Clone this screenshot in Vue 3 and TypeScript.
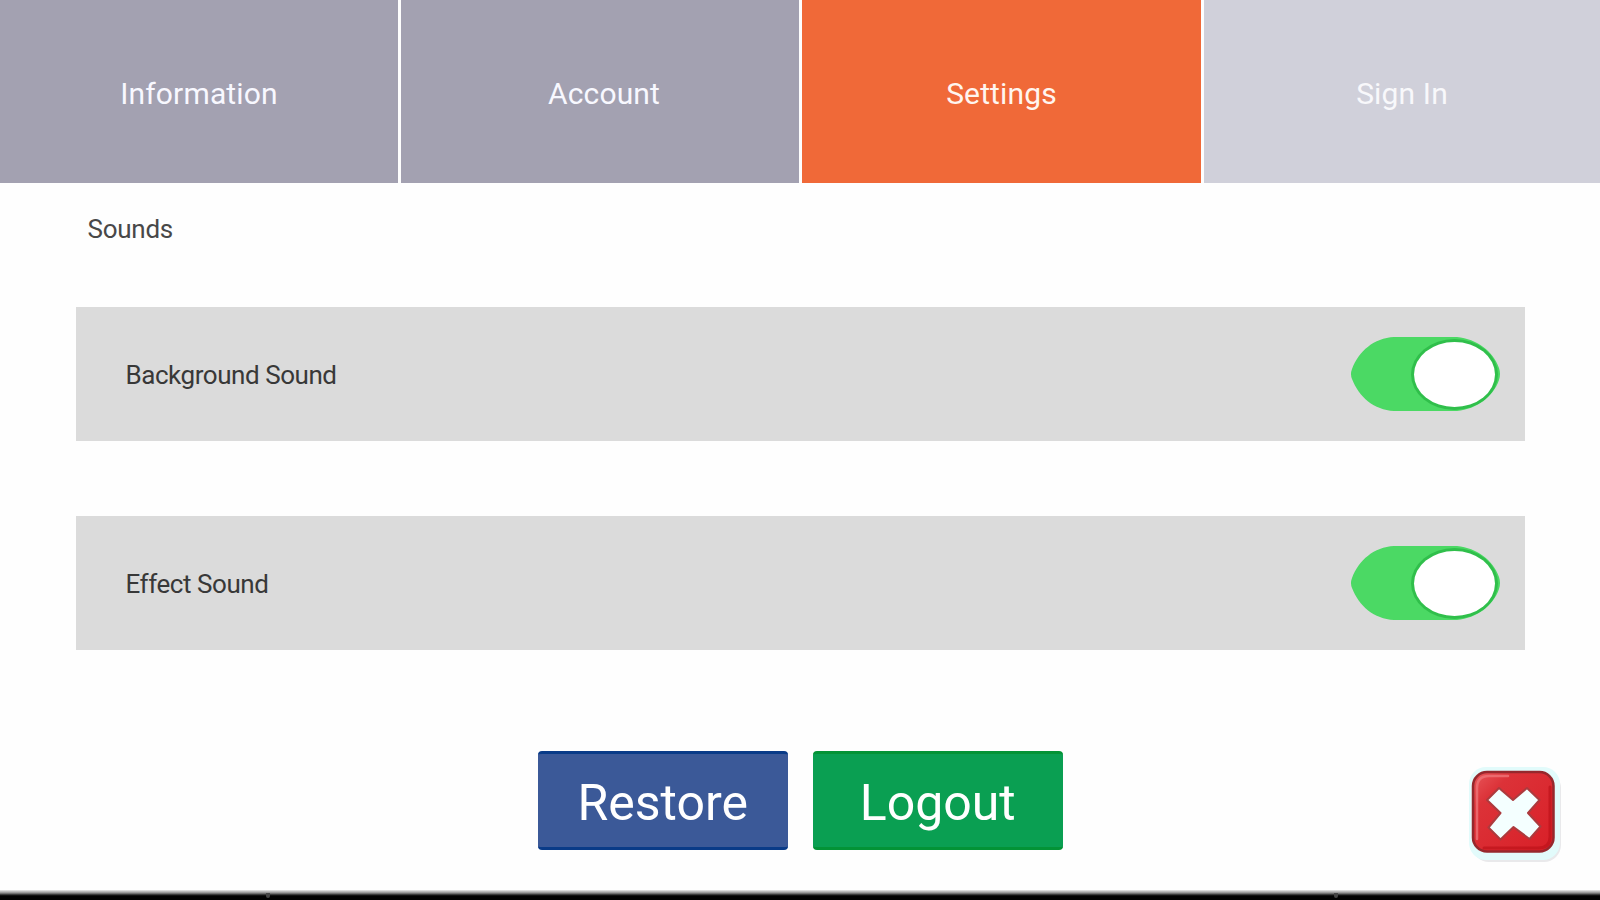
<template>
  <div class="screen">
    <nav class="tabs">
      <button
        v-for="tab in tabs"
        :key="tab.id"
        :class="['tab', tab.id, { active: activeTab === tab.id, disabled: tab.disabled }]"
        :disabled="tab.disabled"
        @click="activeTab = tab.id"
      >
        <span>{{ tab.label }}</span>
      </button>
    </nav>

    <main class="content">
      <h2 class="section-title">Sounds</h2>

      <div v-for="item in sounds" :key="item.id" class="sound-row">
        <span class="sound-label">{{ item.label }}</span>
        <button
          :class="['toggle', { on: item.enabled }]"
          role="switch"
          :aria-checked="item.enabled"
          :aria-label="item.label"
          @click="item.enabled = !item.enabled"
        >
          <span class="knob"></span>
        </button>
      </div>

      <div class="actions">
        <button class="action restore">Restore</button>
        <button class="action logout">Logout</button>
      </div>
    </main>

    <button class="close" aria-label="Close">
      <svg viewBox="0 0 96 98" width="96" height="98">
        <defs>
          <linearGradient id="closeFill" x1="0" y1="0" x2="1" y2="1">
            <stop offset="0" stop-color="#e8575b" />
            <stop offset="0.25" stop-color="#dc3238" />
            <stop offset="1" stop-color="#d81f27" />
          </linearGradient>
        </defs>
        <rect x="4" y="4" width="89" height="91" rx="17" fill="#e9e9eb" />
        <rect x="1" y="0" width="91" height="93" rx="17" fill="#e2fbfb" />
        <rect x="5" y="5" width="80.500" height="79.500" rx="14" fill="url(#closeFill)" stroke="#96282d" stroke-width="2.5" />
        <path d="M9 72V21Q9 9 21 9H40" fill="none" stroke="#ee7478" stroke-width="2.5" stroke-linecap="round" opacity="0.8" />
        <path d="M16 81H70Q82 81 82 70V20" fill="none" stroke="#bd1219" stroke-width="3" stroke-linecap="round" opacity="0.7" />
        <path
          d="M31 21L45 33L59 21L71.500 33L60 46L72.500 59.500L61.500 72L45.500 60L32.500 72.500L20.500 60.500L32.500 46L19 33Z"
          fill="#f4ffff"
          stroke="#ac3b3e"
          stroke-width="2"
          stroke-linejoin="round"
        />
      </svg>
    </button>

    <footer class="bottom-bar">
      <span class="notch"></span>
      <span class="notch"></span>
    </footer>
  </div>
</template>

<script setup lang="ts">
import { ref } from 'vue'

interface Tab {
  id: string
  label: string
  disabled?: boolean
}

interface SoundOption {
  id: string
  label: string
  enabled: boolean
}

const tabs: Tab[] = [
  { id: 'information', label: 'Information' },
  { id: 'account', label: 'Account' },
  { id: 'settings', label: 'Settings' },
  { id: 'sign-in', label: 'Sign In', disabled: true }
]

// Currently selected tab
const activeTab = ref('settings')

const sounds = ref<SoundOption[]>([
  { id: 'background', label: 'Background Sound', enabled: true },
  { id: 'effect', label: 'Effect Sound', enabled: true }
])
</script>

<style>
body {
  margin: 0;
  background: #ffffff;
}
</style>

<style scoped>
.screen {
  position: relative;
  display: flex;
  flex-direction: column;
  width: 100%;
  height: 100vh;
  overflow: hidden;
  background: #fefefe;
  font-family: Roboto, 'Liberation Sans', sans-serif;
}

button {
  border: none;
  padding: 0;
  font-family: inherit;
  cursor: pointer;
}

.tabs {
  display: grid;
  grid-template-columns: 398px 398px 399px 1fr;
  gap: 3px;
  height: 182.500px;
  flex: none;
}

.tab {
  display: flex;
  align-items: center;
  justify-content: center;
  padding-top: 4px;
  background: #a3a1b1;
  color: #f8f8ff;
  font-size: 30px;
  letter-spacing: 0.15px;
}

.tab.account {
  padding-left: 8px;
}

.tab.active {
  background: #f06938;
  color: #fff5ef;
}

.tab.disabled {
  background: #d0d0da;
  color: #f8f8fb;
  cursor: default;
}

.content {
  display: flex;
  flex-direction: column;
  flex: 1;
  padding: 0 75px 0 75.500px;
}

.section-title {
  margin: 30px 0 0 12px;
  height: 94.500px;
  font-size: 26px;
  font-weight: 400;
  line-height: 32px;
  letter-spacing: -0.25px;
  color: #484848;
}

.sound-row {
  display: flex;
  align-items: center;
  justify-content: space-between;
  box-sizing: border-box;
  height: 134px;
  padding: 0 25px 0 50px;
  background: #dbdbdb;
}

.sound-row + .sound-row {
  margin-top: 75px;
}

.sound-label {
  padding-top: 2px;
  font-size: 26px;
  letter-spacing: -0.45px;
  color: #383838;
}

/* The track ends in a slight point on both sides */
.toggle {
  display: flex;
  align-items: center;
  box-sizing: border-box;
  width: 150px;
  height: 74px;
  padding: 0 5px;
  background: #b4b4b4;
  clip-path: path('M44 0H107C127 2 143 14 149 31Q151 37 149 43C143 60 127 72 107 74H44C24 73 9 60 2 42Q0 37 2 32C9 14 24 1 44 0Z');
}

.toggle.on {
  justify-content: flex-end;
  background: #4bd964;
}

.knob {
  width: 81px;
  height: 65px;
  border-radius: 50%;
  background: #ffffff;
  box-shadow: 0 0 0 3px #30bf4b;
}

.actions {
  display: flex;
  justify-content: center;
  gap: 25px;
  margin-top: 101px;
}

.action {
  box-sizing: border-box;
  width: 250px;
  height: 99px;
  padding-top: 4px;
  border-radius: 4px;
  color: #ffffff;
  font-size: 50px;
}

.restore {
  background: #3b5998;
  border-top: 3px solid #093b88;
  border-bottom: 3px solid #093b88;
}

.logout {
  background: #0a9f52;
  border-top: 3px solid #039336;
  border-bottom: 3px solid #039336;
}

.close {
  position: absolute;
  top: 767px;
  left: 1468px;
  width: 96px;
  height: 98px;
  background: none;
}

.close svg {
  display: block;
}

.bottom-bar {
  display: flex;
  justify-content: space-between;
  flex: none;
  box-sizing: border-box;
  height: 10px;
  padding: 3px 262px 0 266px;
  background: linear-gradient(#e8e8e8 0, #8a8a8a 3px, #202020 5px, #000000 6px);
}

.notch {
  width: 4px;
  height: 5px;
  background: #444444;
  border-radius: 0 0 2px 2px;
}
</style>
